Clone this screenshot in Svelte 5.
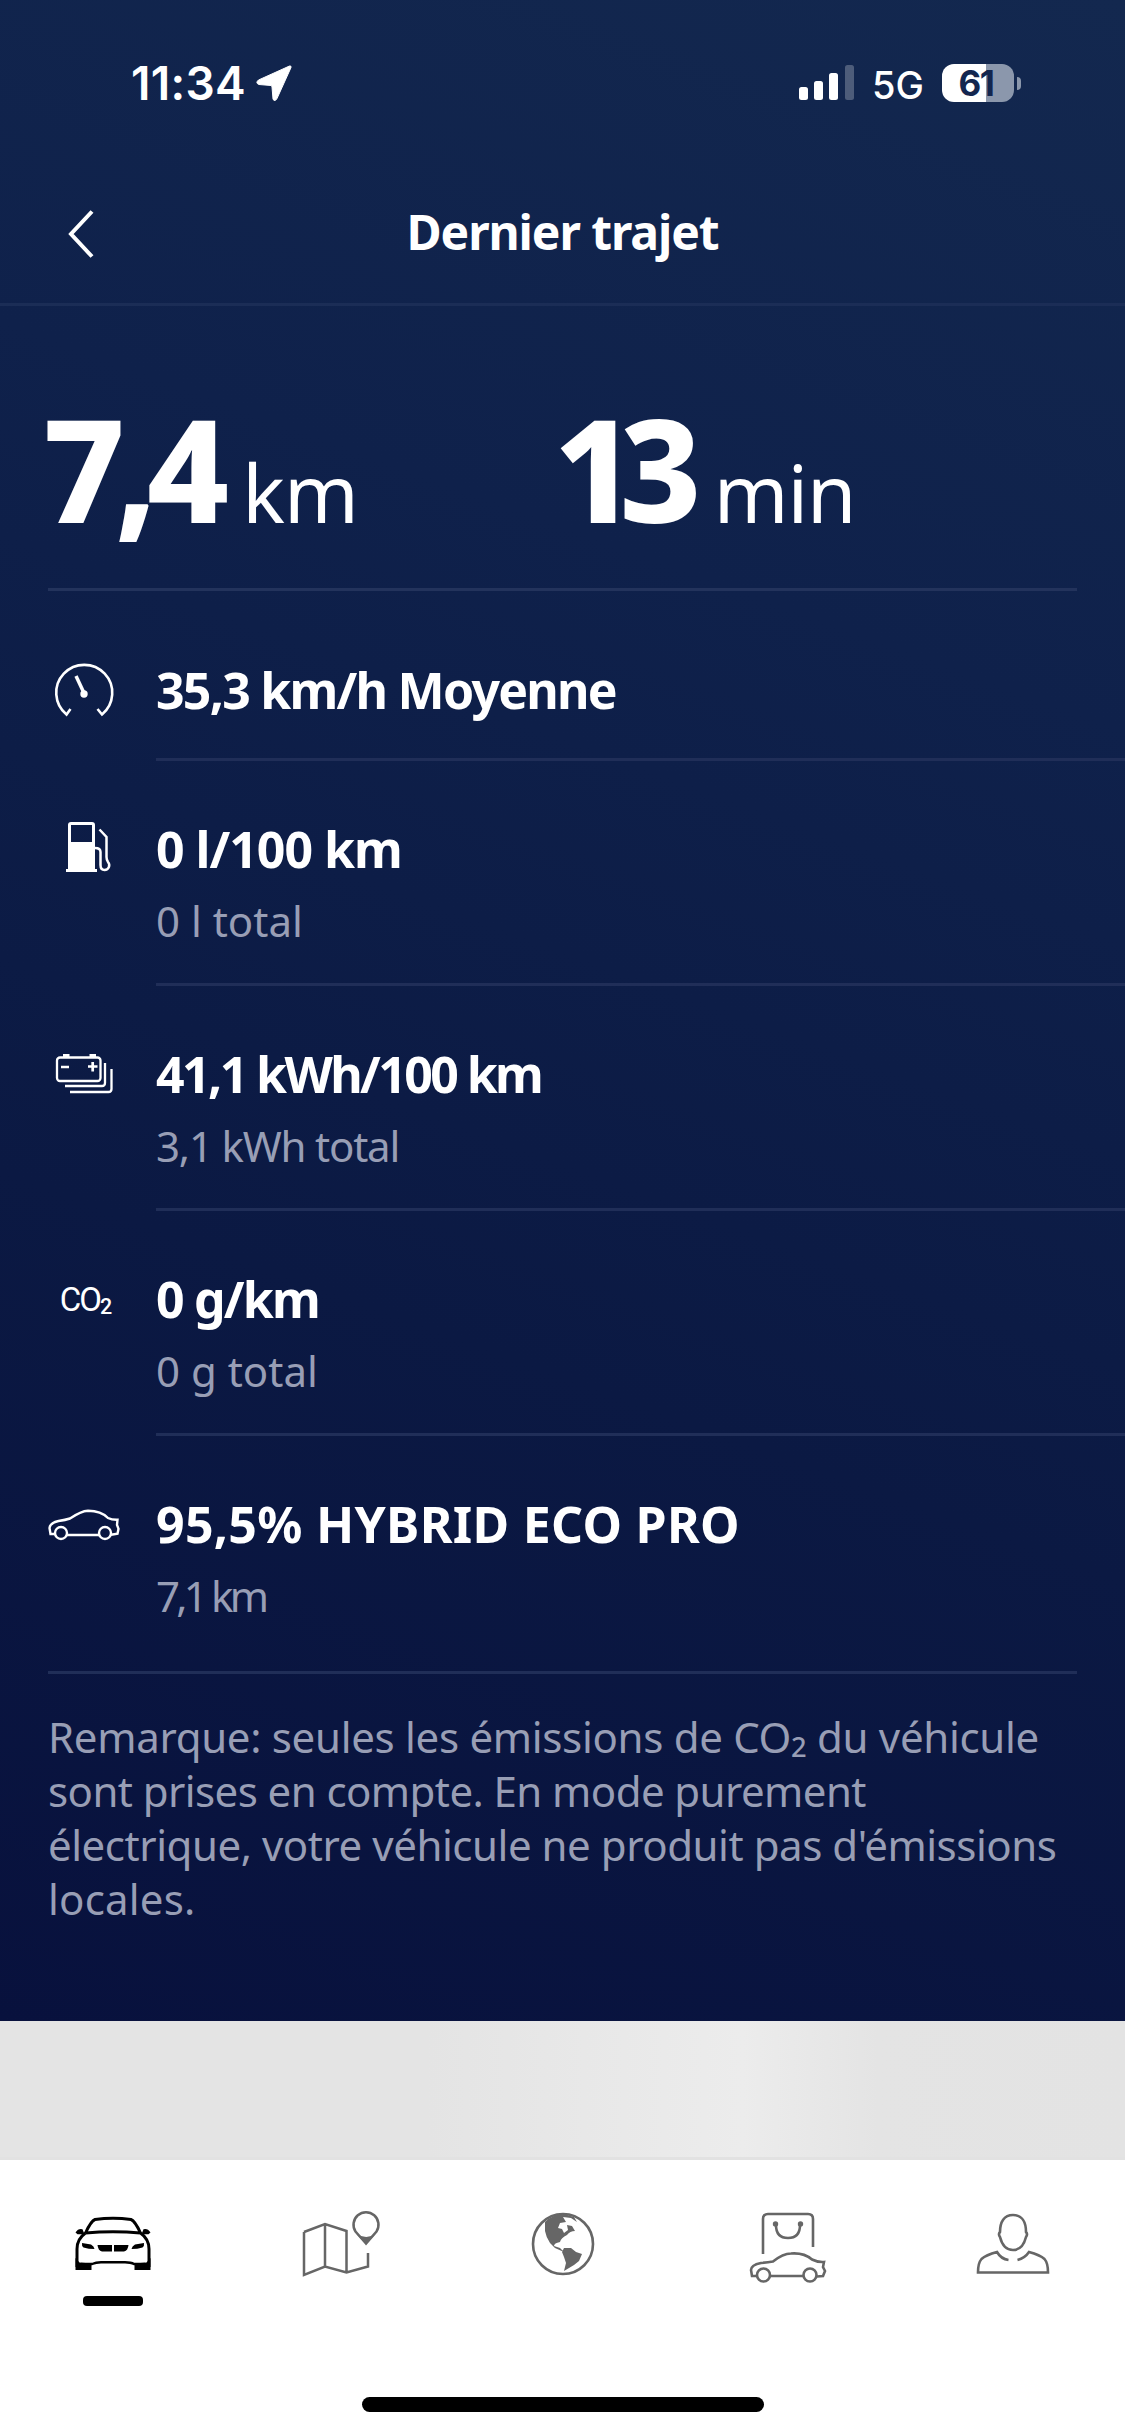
<script lang="ts">
  const stats = [
    { value: '7,4', unit: 'km', kind: 'distance' },
    { value: '13', unit: 'min', kind: 'duration' }
  ];

  const rows = [
    { icon: 'speed', title: '35,3 km/h Moyenne', sub: '' },
    { icon: 'fuel', title: '0 l/100 km', sub: '0 l total' },
    { icon: 'battery', title: '41,1 kWh/100 km', sub: '3,1 kWh total' },
    { icon: 'co2', title: '0 g/km', sub: '0 g total' },
    { icon: 'car', title: '95,5% HYBRID ECO PRO', sub: '7,1 km' }
  ];

  const note = [
    'sont prises en compte. En mode purement',
    "électrique, votre véhicule ne produit pas d'émissions",
    'locales.'
  ];

  const tabs = [
    { icon: 'vehicle', label: 'Véhicule' },
    { icon: 'map', label: 'Carte' },
    { icon: 'globe', label: 'Explorer' },
    { icon: 'shop', label: 'Boutique' },
    { icon: 'profile', label: 'Profil' }
  ];

  let active = 'vehicle';
</script>

<div class="screen">
  <main>
    <div class="status">
      <span class="time">11:34</span>
      <svg class="location" width="36" height="36" viewBox="0 0 36 36">
        <path d="M35 2.500Q35.500 .5 33.500 1L2.500 15Q-1 18 3 19.500L15 20.500Q16 20.500 16 22L17 34Q18.500 37.500 21 33.500Z" fill="#fff" stroke="#fff" stroke-width="1" />
      </svg>
      <span class="space"></span>
      <svg width="56" height="36" viewBox="0 0 56 36" fill="#fff">
        <rect x="0" y="22" width="9" height="13" rx="2.500" />
        <rect x="15" y="16" width="9" height="19" rx="2.500" />
        <rect x="30" y="8" width="9" height="27" rx="2.500" />
        <rect x="46" y="0" width="9" height="35" rx="2.500" opacity=".25" />
      </svg>
      <span class="network">5G</span>
      <div class="charge"><span>61</span></div>
      <i class="charge-tip"></i>
    </div>

    <header>
      <button class="back" aria-label="Retour">
        <svg width="26" height="48" viewBox="0 0 26 48">
          <path d="M24 1.500 3 24l21 22.500" fill="none" stroke="#fff" stroke-width="4" />
        </svg>
      </button>
      <h1>Dernier trajet</h1>
    </header>

    <section class="stats">
      {#each stats as stat}
        <div class="stat {stat.kind}">
          <strong>{stat.value}</strong>
          <span>{stat.unit}</span>
        </div>
      {/each}
    </section>

    <ul class="rows">
      {#each rows as row}
        <li class="row-{row.icon}">
          <div class="icon">
            {#if row.icon === 'speed'}
              <svg width="72" height="60" viewBox="0 0 72 60" fill="none" stroke="#fff" stroke-width="2.600">
                <path d="M22.500 48 18.500 53.500A28 28 0 1 1 54 53.500L49.500 48" />
                <path d="m28 15 8 17" stroke-width="3.500" />
                <circle cx="36" cy="33" r="3.700" fill="#fff" stroke="none" />
              </svg>
            {:else if row.icon === 'fuel'}
              <svg width="72" height="60" viewBox="0 0 72 60">
                <path fill="#fff" fill-rule="evenodd" d="M23 4h21q3 0 3 3v44h2v3H18v-3h2V7q0-3 3-3Zm0 3v17h21V7Z" />
                <path d="m51.500 11.500 7 7.500v20q0 3 1.500 5c2.500 3 1 8-3.500 8q-4 0-4-5V34q0-4-5.500-4" fill="none" stroke="#fff" stroke-width="2.500" />
              </svg>
            {:else if row.icon === 'battery'}
              <svg width="72" height="60" viewBox="0 0 72 60" fill="none" stroke="#fff" stroke-width="2.300">
                <rect x="9" y="14.500" width="43.500" height="23.500" rx="3" />
                <path d="M15 13h6.500M41.500 13H48" stroke-width="4" />
                <path d="M13 24h8M40 23.500h9.500M44.700 19v9.500" stroke-width="2.700" />
                <path d="M57 20v20q0 3-3 3H17M63.500 26v20q0 3-3 3H22" />
              </svg>
            {:else if row.icon === 'co2'}
              <span class="formula">CO<small>2</small></span>
            {:else}
              <svg width="72" height="60" viewBox="0 0 72 60" fill="none" stroke="#fff" stroke-width="2.400">
                <circle cx="13" cy="40" r="6" />
                <circle cx="57" cy="40" r="6" />
                <path d="M7 41H2.500L1.500 35q.5-5 9-7 7-1 11.500-2.500 11-7.500 18-7.800c8 0 15 2 20 7.300q4 2 9.500 1.800l-.5 5 1.500 4-1 5-6.500 1M19 42h32" />
              </svg>
            {/if}
          </div>
          <div class="text">
            <h2>{row.title}</h2>
            {#if row.sub}<p>{row.sub}</p>{/if}
          </div>
        </li>
      {/each}
    </ul>

    <div class="note">
      <p>Remarque: seules les émissions de CO<small>2</small> du véhicule</p>
      {#each note as line}
        <p>{line}</p>
      {/each}
    </div>
  </main>

  <div class="peek"></div>

  <nav>
    {#each tabs as tab}
      <button class={tab.icon} class:active={active === tab.icon} aria-label={tab.label} on:click={() => (active = tab.icon)}>
        {#if tab.icon === 'vehicle'}
          <svg width="84" height="76" viewBox="0 0 84 76" fill="none" stroke="#000" stroke-width="3">
            <path d="M14.500 23Q20 11 24 9.500q18-2.500 36 0Q64 11 69.500 23q8.500 6 8.500 16v18M14.500 23Q6 29 6 39v18M14.500 23q27.500-2.500 55 0" />
            <path d="M4.500 22.500q3-4.500 7-3.200l2 5h-7ZM79.500 22.500q-3-4.500-7-3.200l-2 5h7ZM4.500 48l4 4.500 12 1V60h-16ZM79.500 48l-4 4.500-12 1V60h16Z" fill="#000" stroke="none" />
            <path d="M10 54h11q4-1.800 9-1.800h24q6 0 9 1.800h11" stroke-width="2.400" />
            <path d="m11 33 9 1.500q3 1.500 3.500 4.500-6 0-11-1.500-2-1.500-1.500-4.500ZM73 33l-9 1.500q-3 1.500-3.500 4.500 6 0 11-1.500 2-1.500 1.500-4.500ZM26.500 35H41v6.500H31q-4-1-4.500-6.500ZM57.500 35H43v6.500h10q4-1 4.500-6.500Z" fill="#000" stroke="none" />
          </svg>
        {:else if tab.icon === 'map'}
          <svg width="84" height="76" viewBox="0 0 84 76" fill="none" stroke="#666" stroke-width="2.500">
            <path d="M6 22v43l21-8.500 21.500 6L70 56.500V43M6 22l21-8 21.500 7v41.500M27 14v42.500" />
            <path d="M68 33.500 57.500 21.500A12.500 12.500 0 1 1 78.500 21.500Z" />
            <path d="m58.500 24 9.500 10.500L77.500 24q-9 6-19 0Z" fill="#666" stroke="none" />
          </svg>
        {:else if tab.icon === 'globe'}
          <svg width="84" height="76" viewBox="0 0 84 76">
            <circle cx="42" cy="34" r="30" fill="none" stroke="#666" stroke-width="2.600" />
            <path fill="#666" d="M24 12Q32 4 43 4l10 3 3 5-6-4-8-1 3 5-6 1-2 5 4 1 2 4 4-3-1-5 5 1 3 5q-5 0-8 4-6 3-7 7-6 1-6 4l6 2 4 4-9-4-5-5q-4-6-5-12 0-5 0-7ZM43 38l7 0 5 4 6 2-3 7-5 4-5 3-5 3 2-8-2-6-2-5Z" />
          </svg>
        {:else if tab.icon === 'shop'}
          <svg width="84" height="76" viewBox="0 0 84 76" fill="none" stroke="#666" stroke-width="2.600">
            <path d="M17 44V9q0-5 5-5h40q5 0 5 5v28M30 15q0 13 12 13t12-13" />
            <circle cx="29.500" cy="14" r="2.700" fill="#666" stroke="none" />
            <circle cx="54.500" cy="14" r="2.700" fill="#666" stroke="none" />
            <circle cx="17.500" cy="65" r="6.500" />
            <circle cx="64" cy="65" r="6.500" />
            <path d="M11 66H6l-1-6q0-5 10-7 7-.5 12-1.500 10-8 18-8 13-1 21 6 6 3 12 2.500l-1 5 2 4-2 5-6 .5M24 66h33" />
          </svg>
        {:else}
          <svg width="84" height="76" viewBox="0 0 84 76" fill="none" stroke="#666" stroke-width="2.600">
            <path d="M42 5c9 0 13 7 13 17q2 2 0 5c-2 8-6 13-13 13s-11-5-13-13q-2-3 0-5C29 12 33 5 42 5Z" />
            <path d="M37.500 50Q30 49 26 42 15 45 10.500 49 7 53 7 62.500h70Q77 53 73.500 49 69 45 58 42 54 48 46.500 50" />
          </svg>
        {/if}
        <i class="marker"></i>
      </button>
    {/each}
  </nav>
  <div class="home"><i></i></div>
</div>

<style>
  :global(body) {
    margin: 0;
  }

  .screen {
    width: 1125px;
    height: 2436px;
    display: flex;
    flex-direction: column;
    overflow: hidden;
    background: #fff;
    color: #fff;
    font-family: 'Noto Sans', sans-serif;
  }

  main {
    height: 2021px;
    box-sizing: border-box;
    background: linear-gradient(200deg, #13284f 0%, #0f214b 30%, #0b1943 65%, #08113d 100%);
  }

  h1, h2, p, ul {
    margin: 0;
    padding: 0;
    font-size: inherit;
  }

  button {
    border: 0;
    padding: 0;
    background: none;
  }

  svg {
    display: block;
    flex: none;
  }

  .status {
    height: 166px;
    box-sizing: border-box;
    padding: 0 104px 0 131px;
    display: flex;
    align-items: center;
    font-family: Inter, sans-serif;
  }

  .time {
    font-size: 46px;
    font-weight: 600;
    letter-spacing: 0.3px;
  }

  .location {
    margin-left: 10px;
  }

  .space {
    flex: 1;
  }

  .network {
    margin: 4px 18px 0 17px;
    font-size: 38px;
    font-weight: 500;
  }

  .charge {
    width: 72px;
    height: 38px;
    box-sizing: border-box;
    padding-right: 4px;
    border-radius: 12px;
    background: linear-gradient(90deg, #fff 61%, #8b97ac 61%);
    color: #13264f;
    display: flex;
    align-items: center;
    justify-content: center;
    font-size: 35px;
    font-weight: 700;
    letter-spacing: -1.5px;
  }

  .charge-tip {
    width: 4px;
    height: 13px;
    margin-left: 3px;
    border-radius: 0 4px 4px 0;
    background: #8b97ac;
  }

  header {
    height: 140px;
    box-sizing: border-box;
    border-bottom: 3px solid #1b2d56;
    display: grid;
    grid-template-columns: 162px 1fr 162px;
    align-items: center;
  }

  .back {
    padding: 0 0 2px 68px;
  }

  h1 {
    padding-bottom: 6px;
    text-align: center;
    font-size: 48px;
    font-weight: 700;
    letter-spacing: -1.1px;
  }

  .stats {
    height: 285px;
    box-sizing: border-box;
    margin: 0 48px;
    border-bottom: 3px solid #23335c;
    display: grid;
    grid-template-columns: 1fr 1fr;
    padding-top: 67px;
  }

  .stat {
    display: flex;
    align-items: baseline;
    height: 190px;
    line-height: 190px;
  }

  .stat strong {
    margin-left: -5px;
    font-size: 142px;
    font-weight: 800;
    letter-spacing: -10px;
  }

  .stat span {
    margin-left: 23px;
    font-size: 80px;
    letter-spacing: -1px;
  }

  .duration strong {
    margin-left: -9px;
    letter-spacing: -16px;
  }

  .duration span {
    margin-left: 28px;
  }

  .rows {
    list-style: none;
  }

  li {
    display: flex;
    height: 225px;
    padding-left: 48px;
  }

  .icon {
    width: 72px;
    height: 60px;
    margin: 57px 36px 0 0;
    display: flex;
    justify-content: center;
    align-items: center;
  }

  .text {
    flex: 1;
    box-sizing: border-box;
    padding-top: 53px;
    border-bottom: 3px solid #202e58;
  }

  h2 {
    font-size: 50px;
    line-height: 70px;
    font-weight: 700;
    white-space: nowrap;
  }

  .text p {
    margin-top: 2px;
    font-size: 42px;
    line-height: 70px;
    color: #989eb5;
  }

  .row-speed {
    height: 170px;
  }

  .row-speed .icon {
    margin-top: 70px;
  }

  .row-speed .text {
    padding-top: 64px;
  }

  .row-speed h2 {
    letter-spacing: -1.75px;
  }

  .row-fuel h2 {
    letter-spacing: -1px;
  }

  .row-battery h2 {
    letter-spacing: -2.6px;
  }

  .row-battery p {
    letter-spacing: -1.2px;
  }

  .row-co2 h2 {
    letter-spacing: -1.8px;
  }

  .row-co2 .icon {
    margin-top: 59px;
  }

  .row-car {
    height: 238px;
    box-sizing: border-box;
    margin: 0 48px;
    padding-left: 0;
    border-bottom: 3px solid #202e58;
  }

  .row-car .text {
    border: 0;
  }

  .row-car h2 {
    letter-spacing: 0.3px;
  }

  .row-car p {
    letter-spacing: -3.8px;
  }

  .formula {
    padding-left: 2px;
    font: 400 33px/40px Roboto, sans-serif;
    letter-spacing: -2px;
  }

  small {
    font-size: 0.65em;
    font-weight: 500;
    vertical-align: -0.14em;
    line-height: 0;
  }

  .note {
    padding: 36px 48px 0;
    color: #989eb5;
    font-size: 42px;
    line-height: 54px;
    letter-spacing: -0.3px;
    white-space: nowrap;
  }

  .note p:nth-child(2) {
    letter-spacing: -0.57px;
  }

  .note p:nth-child(3) {
    letter-spacing: -0.45px;
  }

  .note p:nth-child(4) {
    letter-spacing: 0.2px;
  }

  .peek {
    height: 139px;
    box-sizing: border-box;
    border-bottom: 3px solid #e2e2e2;
    background: linear-gradient(90deg, #e4e4e4 0%, #e4e4e4 38%, #ececec 66%, #e4e4e4 78%, #e3e3e3 100%);
  }

  nav {
    height: 200px;
    display: grid;
    grid-template-columns: repeat(5, 1fr);
    background: #fff;
  }

  nav button {
    display: flex;
    flex-direction: column;
    align-items: center;
    padding-top: 50px;
  }

  nav .map {
    padding-left: 5px;
  }

  .marker {
    width: 60px;
    height: 10px;
    margin-top: 10px;
    border-radius: 4px;
  }

  .active .marker {
    background: #000;
  }

  .home {
    flex: 1;
    display: flex;
    justify-content: center;
    align-items: flex-end;
    padding-bottom: 24px;
  }

  .home i {
    width: 402px;
    height: 15px;
    border-radius: 8px;
    background: #000;
  }
</style>
